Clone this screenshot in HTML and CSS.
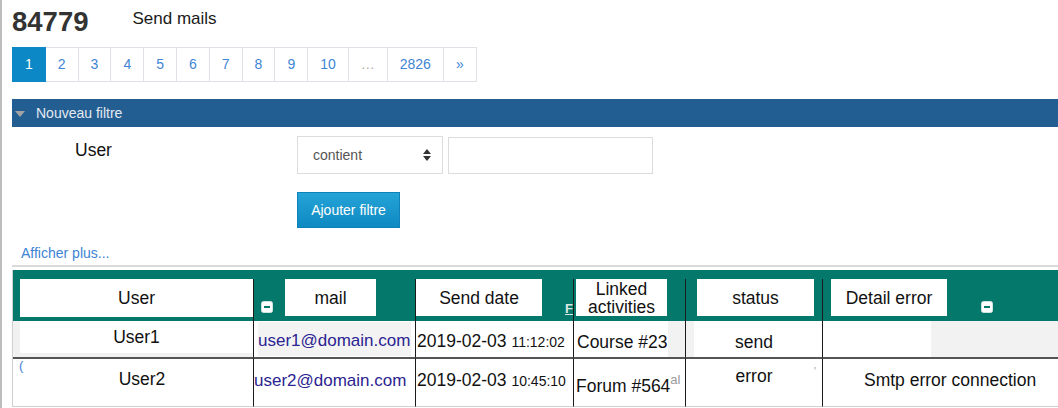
FILE: index.html
```html
<!DOCTYPE html>
<html lang="fr">
<head>
  <meta charset="UTF-8" />
  <meta name="viewport" content="width=device-width, initial-scale=1.0" />
  <title>Send mails</title>
  <link rel="stylesheet" href="styles.css">
</head>
<body>
  <div class="page">

    <div class="head">
      <h2 class="count">84779</h2>
      <span class="title">Send mails</span>
    </div>

    <ul class="pager">
      <li class="active">1</li>
      <li>2</li>
      <li>3</li>
      <li>4</li>
      <li>5</li>
      <li>6</li>
      <li>7</li>
      <li>8</li>
      <li>9</li>
      <li>10</li>
      <li class="dots">…</li>
      <li>2826</li>
      <li>»</li>
    </ul>

    <div class="filterbar"><span class="caret"></span>Nouveau filtre</div>

    <div class="filterrow">
      <label class="flabel">User</label>
      <div class="select">
        contient
        <svg width="10" height="12" viewBox="0 0 10 12"><path d="M5 0 9 5H1z M5 12 1 7h8z" fill="#333"/></svg>
      </div>
      <input class="textin" type="text">
    </div>

    <button class="addbtn">Ajouter filtre</button>

    <a class="more">Afficher plus...</a>
    <div class="sep"></div>

    <table class="grid">
      <colgroup>
        <col class="c1"><col class="c2"><col class="c3"><col class="c4"><col class="c5"><col class="c6">
      </colgroup>
      <thead>
        <tr>
          <th><div class="hc first"><div class="hb b-user">User</div></div></th>
          <th>
            <div class="hc line">
              <svg class="minus" width="12" height="12" viewBox="0 0 12 12"><rect x="0.5" y="0.5" width="11" height="11" rx="2" fill="#fff" stroke="#cfe3df"/><rect x="3" y="5" width="6" height="2" fill="#04786a"/></svg>
              <div class="hb b-mail">mail</div>
            </div>
          </th>
          <th>
            <div class="hc line">
              <div class="hb b-date">Send date</div>
              <span class="ghost">F</span>
            </div>
          </th>
          <th><div class="hc line"><div class="hb b-act">Linked<br>activities</div></div></th>
          <th><div class="hc line"><div class="hb b-st">status</div></div></th>
          <th>
            <div class="hc line">
              <div class="hb b-err">Detail error</div>
              <svg class="minus m-end" width="12" height="12" viewBox="0 0 12 12"><rect x="0.5" y="0.5" width="11" height="11" rx="2" fill="#fff" stroke="#cfe3df"/><rect x="3" y="5" width="6" height="2" fill="#04786a"/></svg>
            </div>
          </th>
        </tr>
      </thead>
      <tbody>
        <tr class="r1">
          <td class="u"><div class="ubox">User1</div></td>
          <td class="line m"><div class="mbox"><a class="mail">user1@domain.com</a></div></td>
          <td class="line date">2019-02-03 <small>11:12:02</small></td>
          <td class="line act">Course #23</td>
          <td class="line st">send</td>
          <td class="line err"></td>
        </tr>
        <tr class="r2">
          <td class="u"><span class="stray">(</span>User2</td>
          <td class="line m"><a class="mail">user2@domain.com</a></td>
          <td class="line date">2019-02-03 <small>10:45:10</small></td>
          <td class="line act">Forum #564<span class="sup">al</span></td>
          <td class="line st">error<span class="tick">'</span></td>
          <td class="line err">Smtp error connection</td>
        </tr>
      </tbody>
    </table>

  </div>
</body>
</html>
```

FILE: styles.css
```css
html, body {
  margin: 0;
  background: #fff;
}
body {
  font-family: "Liberation Sans", Arial, sans-serif;
  color: #111;
}
.page {
  border-left: 2px solid #bdbdbd;
  padding-left: 10px;
  height: 408px;
  box-sizing: border-box;
  overflow: hidden;
}

/* title line */
.head {
  display: flex;
  align-items: flex-start;
}
.count {
  margin: 6px 0 0;
  font-size: 27.5px;
  line-height: 32px;
  font-weight: bold;
  color: #333;
}
.title {
  margin: 9px 0 0 44px;
  font-size: 17px;
  line-height: 20px;
  color: #1a1a1a;
}

/* pagination */
.pager {
  display: flex;
  list-style: none;
  margin: 9px 0 0;
  padding: 0;
}
.pager li {
  padding: 0 12px;
  line-height: 33px;
  font-size: 14px;
  color: #3f85d6;
  border: 1px solid #dee2e6;
  border-left: none;
}
.pager li:first-child {
  border-left: 1px solid #dee2e6;
}
.pager li.active {
  background: #0b88c5;
  border-color: #0b88c5;
  color: #fff;
}
.pager li.dots {
  color: #aaa;
}

/* filter */
.filterbar {
  margin-top: 17px;
  height: 28px;
  line-height: 28px;
  background: #235e92;
  color: #e4eaf1;
  font-size: 14px;
  padding-left: 3px;
}
.caret {
  display: inline-block;
  width: 0;
  height: 0;
  border-top: 6px solid #a3a3a3;
  border-left: 5.5px solid transparent;
  border-right: 5.5px solid transparent;
  margin-right: 11px;
  vertical-align: middle;
}
.filterrow {
  display: flex;
  align-items: flex-start;
  margin-top: 9px;
}
.flabel {
  width: 222px;
  padding-left: 63px;
  margin-top: 4px;
  font-size: 17.5px;
  line-height: 20px;
}
.select {
  width: 146px;
  height: 38px;
  box-sizing: border-box;
  border: 1px solid #dcdcdc;
  display: flex;
  align-items: center;
  justify-content: space-between;
  padding: 0 10px 0 15px;
  font-size: 14px;
  color: #555;
}
.textin {
  width: 205px;
  height: 37px;
  box-sizing: border-box;
  margin: 1px 0 0 5px;
  border: 1px solid #dcdcdc;
  padding: 0;
}
.addbtn {
  display: block;
  margin: 18px 0 0 285px;
  width: 103px;
  height: 36px;
  padding: 0;
  border: 1px solid #0d82bb;
  background: linear-gradient(#25a4d7, #0e89c2);
  color: #fff;
  font-family: inherit;
  font-size: 14px;
}
.more {
  display: block;
  margin-top: 17px;
  padding-left: 9px;
  font-size: 14px;
  line-height: 16px;
  color: #3c83d3;
}
.sep {
  margin-top: 4px;
  height: 2px;
  background: #dadada;
}

/* results table */
.grid {
  margin-top: 3px;
  border-collapse: separate;
  border-spacing: 0;
  table-layout: fixed;
  width: 1046px;
  border-left: 1px solid #cfcfcf;
}
.c1 { width: 240px; }
.c2 { width: 162px; }
.c3 { width: 158px; }
.c4 { width: 112px; }
.c5 { width: 137px; }
.c6 { width: 236px; }

.grid th {
  background: #04786a;
  padding: 9px 0 0;
  font-weight: normal;
  vertical-align: top;
}
.hc {
  display: flex;
  align-items: flex-start;
  height: 42px;
}
.hc.first {
  padding-left: 7px;
}
.hc.line {
  border-left: 1px solid #1a1a1a;
}
.hb {
  background: #fff;
  height: 37px;
  display: flex;
  align-items: center;
  justify-content: center;
  font-size: 17.5px;
  line-height: 18px;
  color: #111;
  text-align: center;
}
.b-user { width: 233px; height: 38px; }
.b-mail { width: 91px; margin-left: 12px; }
.b-date { width: 127px; }
.b-act  { width: 91px; margin-left: 2px; }
.b-st   { width: 117px; margin-left: 11px; }
.b-err  { width: 116px; margin-left: 8px; }
.minus {
  align-self: flex-end;
  margin: 0 0 8px 7px;
}
.minus.m-end {
  margin-left: 34px;
}
.ghost {
  align-self: flex-end;
  margin: 0 0 6px 23px;
  font-size: 13px;
  line-height: 13px;
  font-weight: bold;
  text-decoration: underline;
  color: #d8e8e4;
}

.grid td {
  padding: 0;
  vertical-align: top;
  font-size: 17.5px;
  line-height: 20px;
  white-space: nowrap;
  overflow: hidden;
}
.grid td.line {
  border-left: 1px solid #1a1a1a;
}
.grid small {
  font-size: 14px;
}
.mail {
  color: #2b2391;
  font-size: 17px;
}

.r1 td {
  height: 36px;
  padding-top: 10px;
  box-sizing: border-box;
}
.r1 td.u {
  background: #f1f1f1;
  padding: 0 0 0 7px;
}
.ubox {
  height: 32px;
  line-height: 32px;
  background: #fff;
  text-align: center;
}
.r1 td.m {
  padding: 0;
}
.mbox {
  margin: 1px 4px 0;
  height: 34px;
  line-height: 36px;
  background: #f3f3f3;
  overflow: hidden;
}
.r1 td.date { padding-left: 1px; }
.r1 td.act {
  padding: 11px 0 0 3px;
  background: linear-gradient(to right, #fff 94px, #f2f2f2 94px);
}
.r1 td.st {
  padding-top: 11px;
  text-align: center;
  background: linear-gradient(to right, #f2f2f2 8px, #fff 8px);
}
.r1 td.err {
  background: linear-gradient(to right, #fff 108px, #f2f2f2 108px);
}

.r2 td {
  box-sizing: content-box;
  border-top: 2px solid #555;
  border-bottom: 1px solid #cfcfcf;
  padding-top: 11px;
  height: 36px;
}
.r2 td.u {
  padding: 10px 0 0 18px;
  text-align: center;
  position: relative;
}
.stray {
  position: absolute;
  left: 6px;
  top: 0;
  font-size: 13px;
  line-height: 13px;
  color: #3c83d3;
}
.r2 td.date { padding-left: 1px; }
.r2 td.act { padding-left: 2px; }
.r2 td.st {
  padding-top: 7px;
  text-align: center;
  position: relative;
}
.tick {
  position: absolute;
  right: 6px;
  top: 8px;
  font-size: 10px;
  line-height: 10px;
  color: #999;
}
.r2 td.err { padding-left: 41px; }
.sup {
  font-size: 13px;
  color: #999;
  vertical-align: 8px;
}
```
